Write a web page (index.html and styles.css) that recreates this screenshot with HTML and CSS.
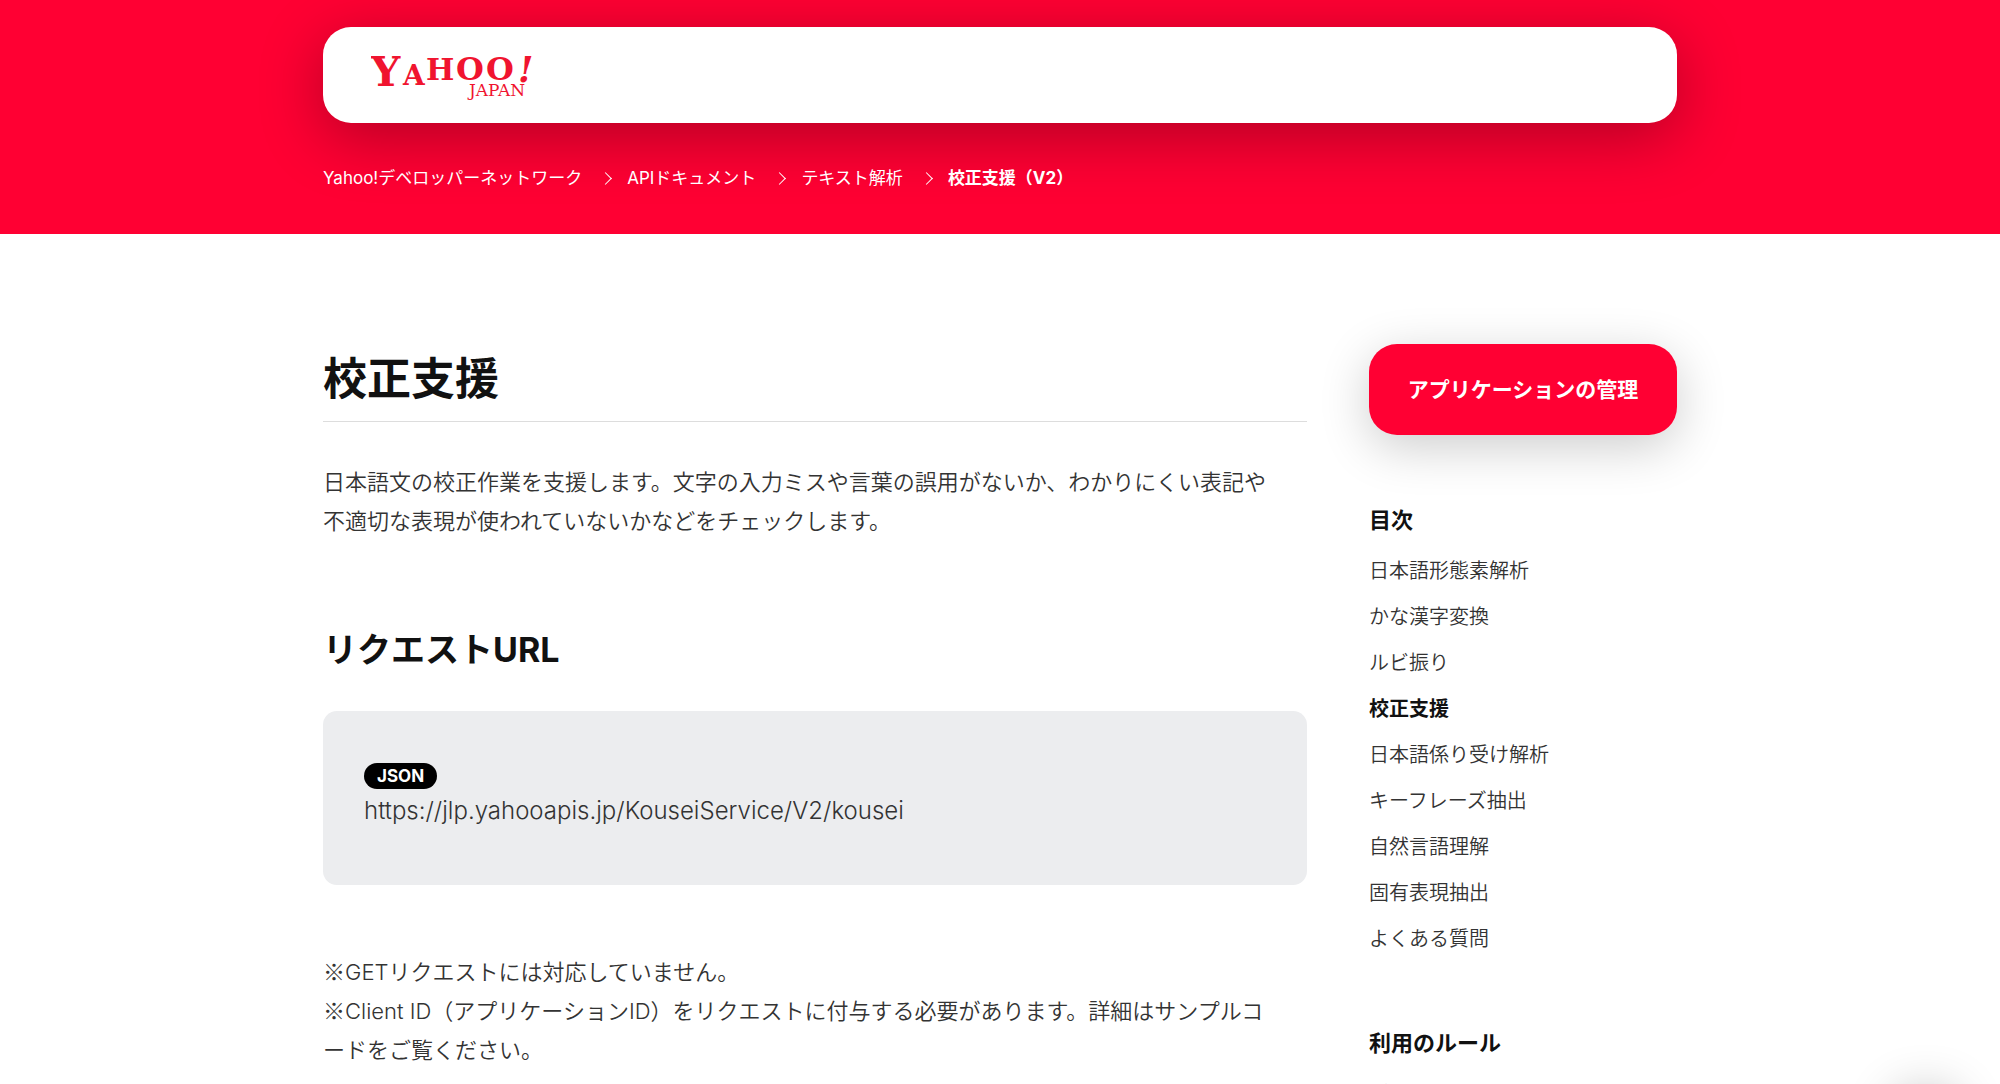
FILE: index.html
```html
<!DOCTYPE html>
<html lang="ja">
<head>
    <meta charset="UTF-8">
    <meta name="viewport" content="width=device-width, initial-scale=1.0">
    <title>校正支援（V2） - Yahoo!デベロッパーネットワーク</title>
    <link rel="stylesheet" href="styles.css">
</head>
<body>

    <header class="header">
        <div class="container">
            <div class="header-card">
                <a href="#" class="logo" aria-label="Yahoo! JAPAN">
                    <svg width="168" height="60" viewBox="0 0 168 60">
                        <text class="logo-main">
                            <tspan x="0" y="41" font-size="41">Y</tspan><tspan x="32" y="40" font-size="28">A</tspan><tspan x="55" y="35" font-size="30">H</tspan><tspan x="85" y="35" font-size="32">O</tspan><tspan x="115" y="35" font-size="32">O</tspan><tspan x="147" y="37" font-size="35" font-style="italic">!</tspan>
                        </text>
                        <text class="logo-sub" x="98" y="51" font-size="17">JAPAN</text>
                    </svg>
                </a>
            </div>
            <nav class="breadcrumb" aria-label="パンくずリスト">
                <ol>
                    <li><a href="#">Yahoo!デベロッパーネットワーク</a></li>
                    <li><a href="#">APIドキュメント</a></li>
                    <li><a href="#">テキスト解析</a></li>
                    <li class="current">校正支援（V2）</li>
                </ol>
            </nav>
        </div>
    </header>

    <div class="container layout">
        <main class="content">
            <h1>校正支援</h1>
            <p>日本語文の校正作業を支援します。文字の入力ミスや言葉の誤用がないか、わかりにくい表記や不適切な表現が使われていないかなどをチェックします。</p>

            <h2>リクエストURL</h2>
            <div class="url-box">
                <span class="badge">JSON</span>
                <div class="url">https://jlp.yahooapis.jp/KouseiService/V2/kousei</div>
            </div>

            <p><span class="mark">※</span>GETリクエストには対応していません。<br>
            <span class="mark">※</span>Client ID（アプリケーションID）をリクエストに付与する必要があります。詳細はサンプルコードをご覧ください。</p>
        </main>

        <aside class="sidebar">
            <a href="#" class="app-button">アプリケーションの管理</a>

            <h3>目次</h3>
            <ul>
                <li><a href="#">日本語形態素解析</a></li>
                <li><a href="#">かな漢字変換</a></li>
                <li><a href="#">ルビ振り</a></li>
                <li><a href="#" class="active">校正支援</a></li>
                <li><a href="#">日本語係り受け解析</a></li>
                <li><a href="#">キーフレーズ抽出</a></li>
                <li><a href="#">自然言語理解</a></li>
                <li><a href="#">固有表現抽出</a></li>
                <li><a href="#">よくある質問</a></li>
            </ul>

            <h3>利用のルール</h3>
            <ul>
                <li><a href="#">ガイドライン</a></li>
            </ul>
        </aside>
    </div>

    <button type="button" class="page-top" aria-label="ページの先頭へ"></button>

</body>
</html>
```
FILE: styles.css
```css
* {
    box-sizing: border-box;
}

body {
    margin: 0;
    background: #fff;
    color: #333;
    font-family: Inter, "Noto Sans CJK JP", sans-serif;
    font-size: 22px;
    font-weight: 350;
    line-height: 39px;
}

a {
    color: inherit;
    text-decoration: none;
}

ul, ol {
    list-style: none;
    margin: 0;
    padding: 0;
}

.container {
    max-width: 1354px;
    margin: 0 auto;
}

/* header */
.header {
    background: #ff0033;
    padding: 27px 0 44px;
}

.header-card {
    display: flex;
    align-items: center;
    height: 96px;
    padding: 0 48px;
    background: #fff;
    border-radius: 28px;
    box-shadow: 0 14px 64px rgba(0, 0, 0, 0.3);
}

.logo svg {
    display: block;
    fill: #f0142f;
}

.logo-main {
    font-family: "DejaVu Serif", serif;
    font-weight: bold;
}

.logo-sub {
    font-family: "DejaVu Serif", serif;
}

.breadcrumb {
    position: relative;
    margin-top: 43px;
    color: #fff;
    font-size: 17px;
    font-weight: 400;
    line-height: 24px;
}

.breadcrumb ol {
    display: flex;
}

.breadcrumb li {
    display: flex;
    align-items: center;
}

.breadcrumb li + li::before {
    content: "";
    width: 8px;
    height: 8px;
    margin: 0 17px 0 19px;
    border-top: 1px solid #fff;
    border-right: 1px solid #fff;
    transform: rotate(45deg);
}

.breadcrumb .current {
    font-weight: bold;
}

/* page body */
.layout {
    display: flex;
    justify-content: space-between;
    gap: 62px;
    padding-top: 110px;
}

.content {
    flex: 1;
    min-width: 0;
}

h1 {
    margin: 0;
    padding: 4px 0 11px;
    border-bottom: 1px solid #ddd;
    color: #111;
    font-size: 44px;
    line-height: 62px;
}

.content p {
    margin: 41px 0 0;
    padding-right: 28px;
}

.mark {
    font-family: "Noto Sans CJK JP", sans-serif;
    line-height: 1;
}

h2 {
    margin: 85px 0 0;
    color: #111;
    font-size: 34px;
    line-height: 48px;
}

.url-box {
    margin: 37px 0 0;
    padding: 52px 41px 53px;
    background: #ecedef;
    border-radius: 14px;
}

.content .url-box + p {
    margin-top: 68px;
}

.badge {
    display: block;
    width: fit-content;
    padding: 0 13px;
    border-radius: 13px;
    background: #000;
    color: #fff;
    font-size: 17px;
    font-weight: bold;
    line-height: 26px;
}

.url {
    font-size: 24px;
    line-height: 43px;
}

/* sidebar */
.sidebar {
    width: 308px;
}

.app-button {
    display: block;
    padding: 26px 0;
    border-radius: 28px;
    background: #ff0033;
    box-shadow: 0 12px 50px rgba(0, 0, 0, 0.2);
    color: #fff;
    font-size: 21px;
    font-weight: bold;
    line-height: 39px;
    text-align: center;
}

.sidebar h3 {
    margin: 66px 0 8px;
    color: #111;
    font-size: 22px;
    line-height: 39px;
}

.sidebar ul + h3 {
    margin-top: 62px;
}

.sidebar li {
    font-size: 20px;
    line-height: 46px;
}

.sidebar .active {
    color: #111;
    font-weight: bold;
}

.page-top {
    position: fixed;
    right: 42px;
    bottom: -72px;
    width: 64px;
    height: 64px;
    border: 0;
    border-radius: 50%;
    background: #fff;
    box-shadow: 0 0 50px rgba(0, 0, 0, 0.3);
}
```
